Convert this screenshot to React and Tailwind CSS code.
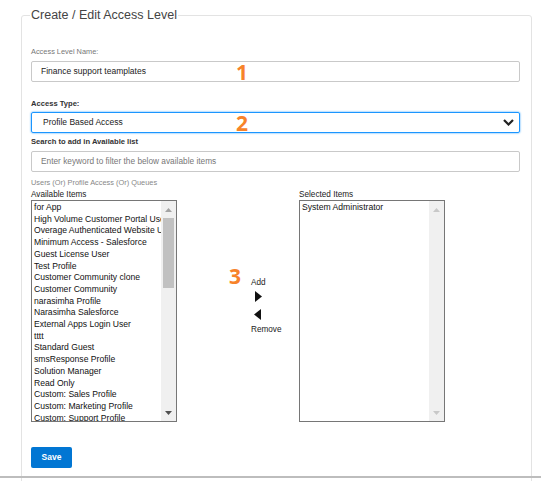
import React from 'react';

const availableItems = [
  'for App',
  'High Volume Customer Portal User',
  'Overage Authenticated Website User',
  'Minimum Access - Salesforce',
  'Guest License User',
  'Test Profile',
  'Customer Community clone',
  'Customer Community',
  'narasimha Profile',
  'Narasimha Salesforce',
  'External Apps Login User',
  'tttt',
  'Standard Guest',
  'smsResponse Profile',
  'Solution Manager',
  'Read Only',
  'Custom: Sales Profile',
  'Custom: Marketing Profile',
  'Custom: Support Profile',
];

const selectedItems = ['System Administrator'];

const Step = ({ n }) => (
  <span className="text-[21px] leading-none font-bold text-[#f7832a] font-['Open_Sans',sans-serif]">{n}</span>
);

const ListBox = ({ items, thumb }) => (
  <div className="flex w-[146px] h-[222px] border border-[#767676] bg-white">
    <div className="flex-1 overflow-hidden pl-[2px] pt-[1px]">
      {items.map((item, i) => (
        <div key={i} className="whitespace-nowrap text-[8.6px] leading-[11.7px] text-[#111]">
          {item}
        </div>
      ))}
    </div>
    <div className="w-[15px] bg-[#f0f0f0] flex flex-col items-center">
      <div className="h-[17px] flex items-center justify-center">
        <svg width="7" height="4" viewBox="0 0 7 4">
          <path d="M0 4 L3.5 0 L7 4 Z" fill={thumb ? '#a3a3a3' : '#c8c8c8'} />
        </svg>
      </div>
      <div className="flex-1 w-full px-[2px]">
        {thumb && <div className="w-full h-[70px] bg-[#c1c1c1]" />}
      </div>
      <div className="h-[17px] flex items-center justify-center">
        <svg width="7" height="4" viewBox="0 0 7 4">
          <path d="M0 0 L7 0 L3.5 4 Z" fill={thumb ? '#505050' : '#c8c8c8'} />
        </svg>
      </div>
    </div>
  </div>
);

const App = () => {
  return (
    <div className="w-[541px] h-[481px] bg-white relative font-['Liberation_Sans',Arial,sans-serif] overflow-hidden">
      <div className="pt-[8px] pl-[21px]">
        <fieldset className="w-[511px] h-[480px] border border-[#e3e3e3] rounded-[3px] pl-[9px] pr-[11px]">
          <legend className="text-[12.5px] leading-[15px] text-[#444] px-[1px] -ml-[1px]">
            Create / Edit Access Level
          </legend>

          <div className="mt-[24px] text-[7.4px] leading-[10px] text-[#777]">Access Level Name:</div>
          <div className="mt-[4px] h-[21px] border border-[#c9c9c9] rounded-[2px] flex items-center pl-[9px] relative">
            <span className="text-[8.5px] text-[#222]">Finance support teamplates</span>
            <div className="absolute left-[204px] top-[0px]"><Step n="1" /></div>
          </div>

          <div className="mt-[17px] text-[7.6px] leading-[10px] font-bold text-[#333]">Access Type:</div>
          <div className="mt-[3px] h-[21px] border-[1.5px] border-[#1b96ff] rounded-[2px] flex items-center pl-[11px] pr-[5px] relative shadow-[0_0_2px_#1b96ff]">
            <span className="text-[8.5px] text-[#222] flex-1">Profile Based Access</span>
            <svg width="11" height="7" viewBox="0 0 11 7">
              <path d="M1 1 L5.5 5.5 L10 1" stroke="#222" strokeWidth="2.2" fill="none" />
            </svg>
            <div className="absolute left-[204px] top-[0px]"><Step n="2" /></div>
          </div>

          <div className="mt-[4px] text-[7.6px] leading-[10px] font-bold text-[#333]">Search to add in Available list</div>
          <div className="mt-[4px] h-[21px] border border-[#c9c9c9] rounded-[2px] flex items-center pl-[9px]">
            <span className="text-[8.3px] text-[#777]">Enter keyword to filter the below available items</span>
          </div>

          <div className="mt-[5px] text-[7.4px] leading-[11px] text-[#888]">Users (Or) Profile Access (Or) Queues</div>

          <div className="flex mt-[1px]">
            <div className="flex flex-col">
              <div className="text-[8.2px] leading-[11px] text-[#222]">Available Items</div>
              <ListBox items={availableItems} thumb />
            </div>
            <div className="w-[122px] flex items-start">
              <div className="mt-[77px] ml-[52px]"><Step n="3" /></div>
              <div className="mt-[88px] ml-[10px] flex flex-col items-start text-[8.2px] leading-[11px] text-[#222]">
                <span>Add</span>
                <svg className="mt-[3px] ml-[4px]" width="7" height="11" viewBox="0 0 7 11">
                  <path d="M0 0 L7 5.5 L0 11 Z" fill="#111" />
                </svg>
                <svg className="mt-[7px] ml-[3px]" width="7" height="11" viewBox="0 0 7 11">
                  <path d="M7 0 L0 5.5 L7 11 Z" fill="#111" />
                </svg>
                <span className="mt-[4px]">Remove</span>
              </div>
            </div>
            <div className="flex flex-col">
              <div className="text-[8.2px] leading-[11px] text-[#222]">Selected Items</div>
              <ListBox items={selectedItems} />
            </div>
          </div>

          <button className="mt-[25px] w-[41px] h-[21px] bg-[#0176d3] rounded-[2px] text-white text-[8.5px] font-bold flex items-center justify-center">
            Save
          </button>
        </fieldset>
      </div>
      <div className="absolute left-0 right-0 top-[476px] h-[2px] bg-[#bdbdbd]" />
    </div>
  );
};

export default App;
